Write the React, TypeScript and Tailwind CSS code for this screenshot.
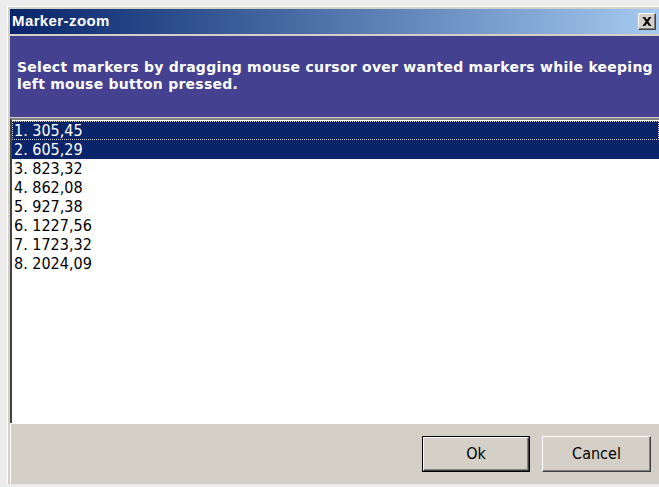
const markers = ["305,45", "605,29", "823,32", "862,08", "927,38", "1227,56", "1723,32", "2024,09"];
const selected = [0, 1];

const captionFont = { fontFamily: '"Liberation Sans", Tahoma, Arial, sans-serif' };
const uiFont = { fontFamily: '"DejaVu Sans", Tahoma, sans-serif' };
const listFont = { fontFamily: '"DejaVu Sans Condensed", "Liberation Sans Narrow", "DejaVu Sans", sans-serif' };

function CloseButton() {
  return (
    <button className="flex h-[17px] w-[18px] items-center justify-center border-t border-l border-white border-r border-b border-r-[#404040] border-b-[#404040] bg-[#d4d0c8] shadow-[inset_-1px_-1px_0_#808080]">
      <svg width="10" height="9" viewBox="0 0 10 9">
        <path d="M0.5 0h2.6l1.9 2.8L6.9 0h2.6L6.3 4.5 9.5 9H6.9L5 6.2 3.1 9H0.5l3.2-4.5z" fill="#000" />
      </svg>
    </button>
  );
}

function PushButton({ label, isDefault }: { label: string; isDefault?: boolean }) {
  return (
    <div className={isDefault ? "border border-black" : ""}>
      <button
        className={`flex items-center justify-center bg-[#d4d0c8] border-t border-l border-white border-r border-b border-r-[#404040] border-b-[#404040] shadow-[inset_-1px_-1px_0_#808080] text-[16px] text-black ${
          isDefault ? "h-[34px] w-[106px]" : "h-[36px] w-[109px]"
        }`}
        style={listFont}
      >
        {label}
      </button>
    </div>
  );
}

export default function App() {
  return (
    <div className="h-[487px] w-[659px] overflow-hidden bg-[#ececec] pl-[7px] pt-[6px]">
      <div className="flex h-[478px] w-[652px] flex-col border-l border-t border-white bg-[#d4d0c8] pl-[2px] pt-[2px]">
        {/* caption bar */}
        <div className="flex h-[25px] items-center justify-between bg-gradient-to-r from-[#0a246a] to-[#a6caf0] pl-[2px] pr-[3px]">
          <span className="text-[15px] font-bold tracking-[0.4px] text-white" style={captionFont}>
            Marker-zoom
          </span>
          <CloseButton />
        </div>

        {/* instructions */}
        <div
          className="mt-[2px] h-[81px] overflow-hidden whitespace-nowrap bg-[#434190] pl-[7px] pt-[23px] text-[14px] font-bold leading-[17px] tracking-[0.25px] text-white"
          style={uiFont}
        >
          Select markers by dragging mouse cursor over wanted markers while keeping
          <br />
          left mouse button pressed.
        </div>

        {/* marker list */}
        <div className="mt-[1px] h-[305px] border-l-2 border-t-2 border-l-[#404040] border-t-[#808080] bg-white pt-[1px]">
          {markers.map((m, i) => {
            const isSel = selected.includes(i);
            return (
              <div
                key={m}
                className={`flex h-[19px] items-center pl-[1px] text-[16px] leading-none ${
                  isSel ? "bg-[#0a246a] text-white" : "text-black"
                } ${i === 0 ? "border border-dotted border-[#d4d0c8]" : "border border-transparent"}`}
                style={listFont}
              >
                {i + 1}. {m}
              </div>
            );
          })}
        </div>

        {/* button row */}
        <div className="flex h-[60px] items-center gap-[12px] border-l border-t border-white bg-[#d4d0c8] pl-[411px] pt-[1px]">
          <PushButton label="Ok" isDefault />
          <PushButton label="Cancel" />
        </div>
      </div>
    </div>
  );
}
